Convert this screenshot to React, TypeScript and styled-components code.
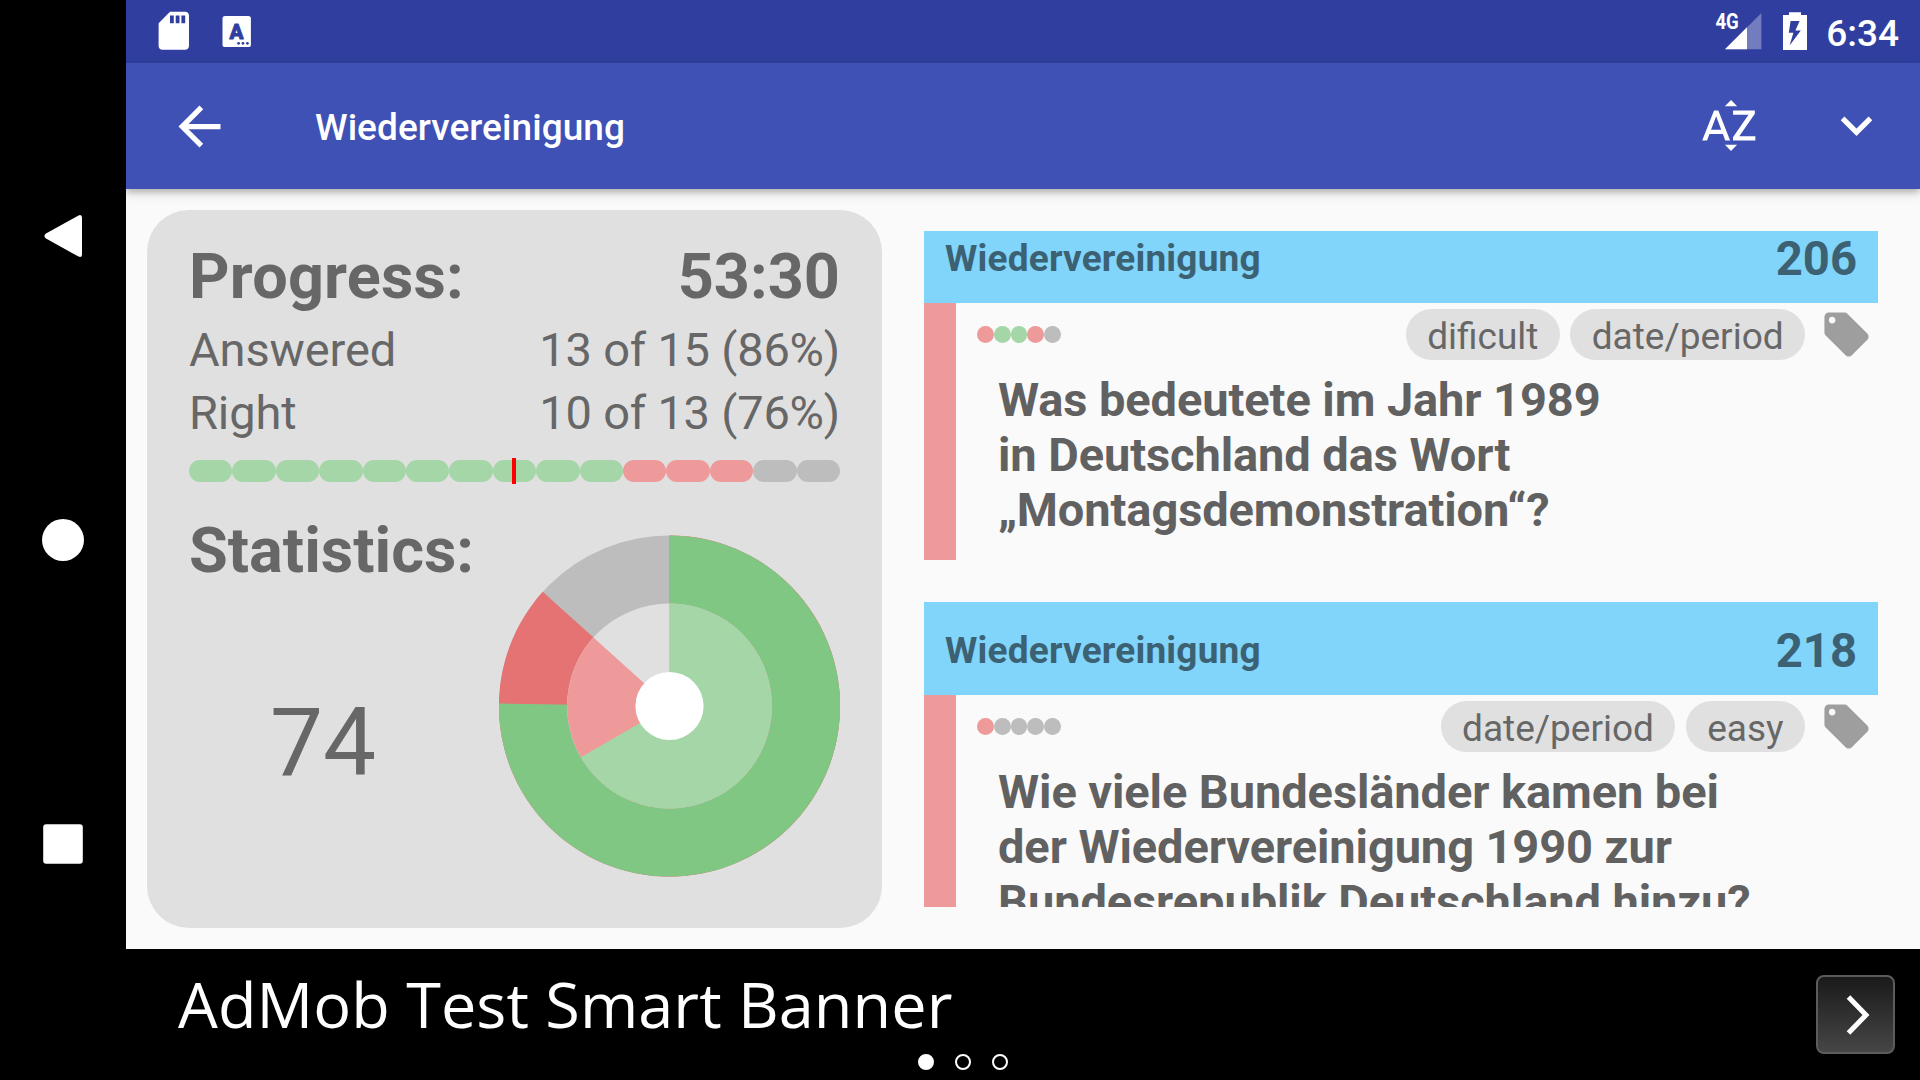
import React from "react";
import styled, { createGlobalStyle } from "styled-components";
import {
  MdArrowBack,
  MdExpandMore,
  MdLocalOffer,
  MdSdCard,
  MdSortByAlpha,
} from "react-icons/md";

const GREEN = "#81c784";
const GREEN_LIGHT = "#a5d6a7";
const RED = "#e57373";
const RED_LIGHT = "#ef9a9a";
const GRAY = "#bdbdbd";
const PANEL = "#e0e0e0";

const GlobalStyle = createGlobalStyle`
  *, *::before, *::after { box-sizing: border-box; }
  body { margin: 0; background: #000; }
`;

const Screen = styled.div`
  display: flex;
  width: 1920px;
  height: 1080px;
  overflow: hidden;
  background: #000;
  font-family: Roboto, "Liberation Sans", sans-serif;
  svg { display: block; flex: none; }
`;

const NavBar = styled.nav`
  flex: none;
  width: 126px;
  display: flex;
  flex-direction: column;
  justify-content: space-between;
  align-items: center;
  padding: 215px 0 215px;
`;

const NavIcon = styled.svg`
  width: 42px;
  height: 42px;
  fill: #fff;
`;

const Main = styled.main`
  flex: 1;
  min-width: 0;
  display: flex;
  flex-direction: column;
`;

const StatusBar = styled.div`
  flex: none;
  height: 63px;
  display: flex;
  justify-content: space-between;
  background: #303f9f;
  color: #fff;
`;

const StatusGroup = styled.div<{ $left?: number; $right?: number }>`
  display: flex;
  align-items: flex-start;
  padding: 8px ${(p) => p.$right ?? 0}px 0 ${(p) => p.$left ?? 0}px;
`;

const StatusIcon = styled.svg<{ $gap: number }>`
  margin-left: ${(p) => p.$gap}px;
  font-family: Roboto, sans-serif;
`;

const Clock = styled.span`
  margin-left: 19px;
  font-size: 37px;
  font-weight: 500;
  line-height: 52px;
`;

const Toolbar = styled.header`
  flex: none;
  position: relative;
  z-index: 1;
  height: 126px;
  display: flex;
  align-items: center;
  padding: 0 32px 0 42px;
  background: #3f51b5;
  color: #fff;
  box-shadow: 0 3px 6px rgba(0, 0, 0, 0.2), 0 4px 12px rgba(0, 0, 0, 0.14);
`;

const ToolbarTitle = styled.h1`
  flex: 1;
  margin: 4px 0 0 84px;
  font-size: 37px;
  font-weight: 500;
  line-height: 44px;
  letter-spacing: 0.06px;
`;

const ToolbarActions = styled.div`
  display: flex;
  gap: 64px;
  margin-top: -1px;
`;

const Content = styled.div`
  flex: none;
  height: 760px;
  display: flex;
  background: #fafafa;
  padding: 21px 42px 21px 21px;
  gap: 42px;
`;

const StatsCard = styled.section`
  flex: none;
  width: 735px;
  height: 718px;
  padding: 29px 42px 0;
  border-radius: 42px;
  background: ${PANEL};
  color: #676767;
`;

const HeadRow = styled.div`
  display: flex;
  justify-content: space-between;
  height: 79px;
  font-size: 63px;
  font-weight: 700;
  line-height: 75px;
`;

const HeadLabel = styled.span`
  letter-spacing: 0.2px;
`;

const InfoRow = styled.div`
  display: flex;
  justify-content: space-between;
  font-size: 47px;
  line-height: 63px;
`;

const InfoLabel = styled.span`
  letter-spacing: -0.12px;
`;

const InfoValue = styled.span`
  letter-spacing: -0.2px;
`;

const ProgressBar = styled.div`
  position: relative;
  display: flex;
  height: 22px;
  margin-top: 16px;
`;

const Segment = styled.span<{ $color: string }>`
  flex: 1;
  border-radius: 11px;
  background: ${(p) => p.$color};
`;

const Marker = styled.i`
  position: absolute;
  left: 323px;
  top: -2px;
  width: 4px;
  height: 26px;
  background: #f00;
`;

const StatsRow = styled.div`
  display: flex;
  gap: 42px;
  margin-top: 31px;
`;

const ScoreColumn = styled.div`
  width: 268px;
  display: flex;
  flex-direction: column;
`;

const StatsTitle = styled.h2`
  margin: 0;
  font-size: 63px;
  font-weight: 700;
  line-height: 75px;
  white-space: nowrap;
`;

const Score = styled.div`
  margin-top: 100px;
  text-align: center;
  font-size: 94.5px;
  line-height: 110px;
`;

const Donut = styled.svg`
  width: 341px;
  height: 342px;
  margin-top: 22px;
`;

const QuestionList = styled.section`
  flex: 1;
  height: 676px;
  margin-top: 21px;
  overflow: hidden;
`;

const ScrolledItems = styled.div`
  display: flex;
  flex-direction: column;
  gap: 42px;
  margin-top: -21px;
`;

const Item = styled.article`
  height: 350px;
`;

const ItemHeader = styled.header`
  height: 93px;
  display: flex;
  justify-content: space-between;
  align-items: center;
  padding: 0 21px;
  background: #81d4fa;
  color: #3b6173;
  font-weight: 700;
`;

const ItemTitle = styled.span`
  font-size: 37px;
  line-height: 44px;
  padding-top: 4px;
  letter-spacing: 0.19px;
`;

const ItemNumber = styled.span`
  font-size: 47.25px;
  line-height: 56px;
  padding-top: 4px;
`;

const ItemBody = styled.div`
  display: flex;
  height: 257px;
  border-left: 32px solid ${RED_LIGHT};
  flex-direction: column;
`;

const MetaRow = styled.div`
  display: flex;
  align-items: center;
  height: 57px;
  padding: 6px 5px 0 21px;
`;

const Dots = styled.div`
  display: flex;
  flex: 1;
  margin-top: -1px;
`;

const Dot = styled.span<{ $color: string }>`
  width: 16.8px;
  height: 17px;
  border-radius: 50%;
  background: ${(p) => p.$color};
`;

const Tags = styled.div`
  display: flex;
  gap: 10.5px;
  margin-right: 15px;
`;

const Tag = styled.span`
  height: 51px;
  padding: 0 21.4px;
  border-radius: 25.5px;
  background: ${PANEL};
  color: #676767;
  font-size: 37px;
  line-height: 55px;
`;

const Question = styled.p`
  margin: 12px 0 0;
  padding-left: 42px;
  color: #616161;
  font-size: 47px;
  font-weight: 700;
  line-height: 55px;
  letter-spacing: -0.09px;
  white-space: pre-line;
`;

const Banner = styled.footer`
  flex: 1;
  display: grid;
  grid-template-columns: 1fr 79px;
  grid-template-rows: 105px 16px;
  padding: 0 25px 0 52px;
  color: #fff;
`;

const BannerText = styled.div`
  padding-top: 11px;
  font-family: "Open Sans", "Noto Sans", sans-serif;
  font-size: 63px;
  line-height: 88px;
  letter-spacing: 0.05px;
`;

const BannerButton = styled.button`
  width: 79px;
  height: 79px;
  margin: 26px 0 0;
  padding: 0;
  display: flex;
  align-items: center;
  justify-content: center;
  border: 2.5px solid #5c5c5c;
  border-radius: 8px;
  background: linear-gradient(#1a1a1a, #464646);
`;

const Pager = styled.div`
  grid-column: 1 / 3;
  display: flex;
  gap: 21px;
  padding-left: 740.2px;
`;

const PagerDot = styled.i<{ $active?: boolean }>`
  width: 16px;
  height: 16px;
  border: 2.6px solid #fff;
  border-radius: 50%;
  background: ${(p) => (p.$active ? "#fff" : "transparent")};
`;

const sector = (r: number, degrees: number) => {
  const a = (degrees * Math.PI) / 180;
  const x = r * Math.sin(a);
  const y = -r * Math.cos(a);
  return `M0 0V${-r}A${r} ${r} 0 ${degrees > 180 ? 1 : 0} 1 ${x} ${y}Z`;
};

const segments = [
  ...Array(10).fill(GREEN_LIGHT),
  ...Array(3).fill(RED_LIGHT),
  ...Array(2).fill(GRAY),
];

const questions = [
  {
    number: 206,
    dots: [RED_LIGHT, GREEN_LIGHT, GREEN_LIGHT, RED_LIGHT, GRAY],
    tags: ["dificult", "date/period"],
    text: "Was bedeutete im Jahr 1989\nin Deutschland das Wort\n„Montagsdemonstration“?",
  },
  {
    number: 218,
    dots: [RED_LIGHT, GRAY, GRAY, GRAY, GRAY],
    tags: ["date/period", "easy"],
    text: "Wie viele Bundesländer kamen bei\nder Wiedervereinigung 1990 zur\nBundesrepublik Deutschland hinzu?",
  },
];

function SystemStatus() {
  return (
    <StatusBar>
      <StatusGroup $left={24.5}>
        <MdSdCard size={45.6} />
        <StatusIcon $gap={25.5} width="30" height="48" viewBox="0 0 30 48">
          <rect x="0.5" y="8" width="28.4" height="31" rx="2.6" fill="#fff" />
          <text
            x="14.6"
            y="30.6"
            textAnchor="middle"
            fontSize="20.5"
            fontWeight="900"
            fill="#303f9f"
            stroke="#303f9f"
            strokeWidth="0.8"
            strokeLinejoin="round"
          >
            A
          </text>
          <circle cx="16.6" cy="35.3" r="1.4" fill="#303f9f" />
          <circle cx="21" cy="35.3" r="1.4" fill="#303f9f" />
          <circle cx="25.4" cy="35.3" r="1.4" fill="#303f9f" />
        </StatusIcon>
      </StatusGroup>
      <StatusGroup $right={21}>
        <StatusIcon $gap={0} width="48" height="48" viewBox="0 0 48 48">
          <path d="M11 41.3L47.4 5v36.3z" fill="#fff" opacity="0.32" />
          <path d="M11 41.3L33 19.3v22z" fill="#fff" />
          <text
            x="1.4"
            y="21"
            fontSize="21.5"
            fontWeight="700"
            fill="#fff"
            textLength="23.4"
            lengthAdjust="spacingAndGlyphs"
          >
            4G
          </text>
        </StatusIcon>
        <StatusIcon $gap={21} width="24" height="48" viewBox="0 0 24 48">
          <path
            fillRule="evenodd"
            fill="#fff"
            d="M6 4.3h12V7h6v35H0V7h6zM7.6 13L5.8 24.8h4.6L6.6 37.4 17.8 22.4h-5.4L16.6 13z"
          />
        </StatusIcon>
        <Clock>6:34</Clock>
      </StatusGroup>
    </StatusBar>
  );
}

function Statistics() {
  return (
    <StatsCard>
      <HeadRow>
        <HeadLabel>Progress:</HeadLabel>
        <span>53:30</span>
      </HeadRow>
      <InfoRow>
        <InfoLabel>Answered</InfoLabel>
        <InfoValue>13 of 15 (86%)</InfoValue>
      </InfoRow>
      <InfoRow>
        <InfoLabel>Right</InfoLabel>
        <InfoValue>10 of 13 (76%)</InfoValue>
      </InfoRow>
      <ProgressBar>
        {segments.map((color, i) => (
          <Segment key={i} $color={color} />
        ))}
        <Marker />
      </ProgressBar>
      <StatsRow>
        <ScoreColumn>
          <StatsTitle>Statistics:</StatsTitle>
          <Score>74</Score>
        </ScoreColumn>
        <Donut viewBox="-170.5 -171 341 342">
          <circle r="170.6" fill={GRAY} />
          <path d={sector(170.6, 312)} fill={RED} />
          <path d={sector(170.6, 270.8)} fill={GREEN} />
          <circle r="102.4" fill={PANEL} />
          <path d={sector(102.4, 312)} fill={RED_LIGHT} />
          <path d={sector(102.4, 240)} fill={GREEN_LIGHT} />
          <circle r="34.1" fill="#fff" />
        </Donut>
      </StatsRow>
    </StatsCard>
  );
}

export default function App() {
  return (
    <Screen>
      <GlobalStyle />
      <NavBar>
        <NavIcon viewBox="0 0 42 42">
          <path d="M36.5 0.4Q40 -0.8 40 2.6V39.4Q40 42.8 36.5 41.6L4 23.6Q0.8 21 4 18.4Z" />
        </NavIcon>
        <NavIcon viewBox="0 0 42 42">
          <circle cx="21" cy="21" r="21" />
        </NavIcon>
        <NavIcon viewBox="0 0 42 42">
          <rect x="1.2" y="1.2" width="39.6" height="39.6" rx="3" />
        </NavIcon>
      </NavBar>
      <Main>
        <SystemStatus />
        <Toolbar>
          <MdArrowBack size={63} />
          <ToolbarTitle>Wiedervereinigung</ToolbarTitle>
          <ToolbarActions>
            <MdSortByAlpha size={63} />
            <MdExpandMore size={63} />
          </ToolbarActions>
        </Toolbar>
        <Content>
          <Statistics />
          <QuestionList>
            <ScrolledItems>
              {questions.map((q) => (
                <Item key={q.number}>
                  <ItemHeader>
                    <ItemTitle>Wiedervereinigung</ItemTitle>
                    <ItemNumber>{q.number}</ItemNumber>
                  </ItemHeader>
                  <ItemBody>
                    <MetaRow>
                      <Dots>
                        {q.dots.map((color, i) => (
                          <Dot key={i} $color={color} />
                        ))}
                      </Dots>
                      <Tags>
                        {q.tags.map((t) => (
                          <Tag key={t}>{t}</Tag>
                        ))}
                      </Tags>
                      <MdLocalOffer size={53} color="#9e9e9e" />
                    </MetaRow>
                    <Question>{q.text}</Question>
                  </ItemBody>
                </Item>
              ))}
            </ScrolledItems>
          </QuestionList>
        </Content>
        <Banner>
          <BannerText>AdMob Test Smart Banner</BannerText>
          <BannerButton aria-label="Open">
            <svg width="40" height="44" viewBox="0 0 40 44">
              <path
                d="M12.5 4L30 22L12.5 40"
                fill="none"
                stroke="#fff"
                strokeWidth="5"
              />
            </svg>
          </BannerButton>
          <Pager>
            <PagerDot $active />
            <PagerDot />
            <PagerDot />
          </Pager>
        </Banner>
      </Main>
    </Screen>
  );
}
